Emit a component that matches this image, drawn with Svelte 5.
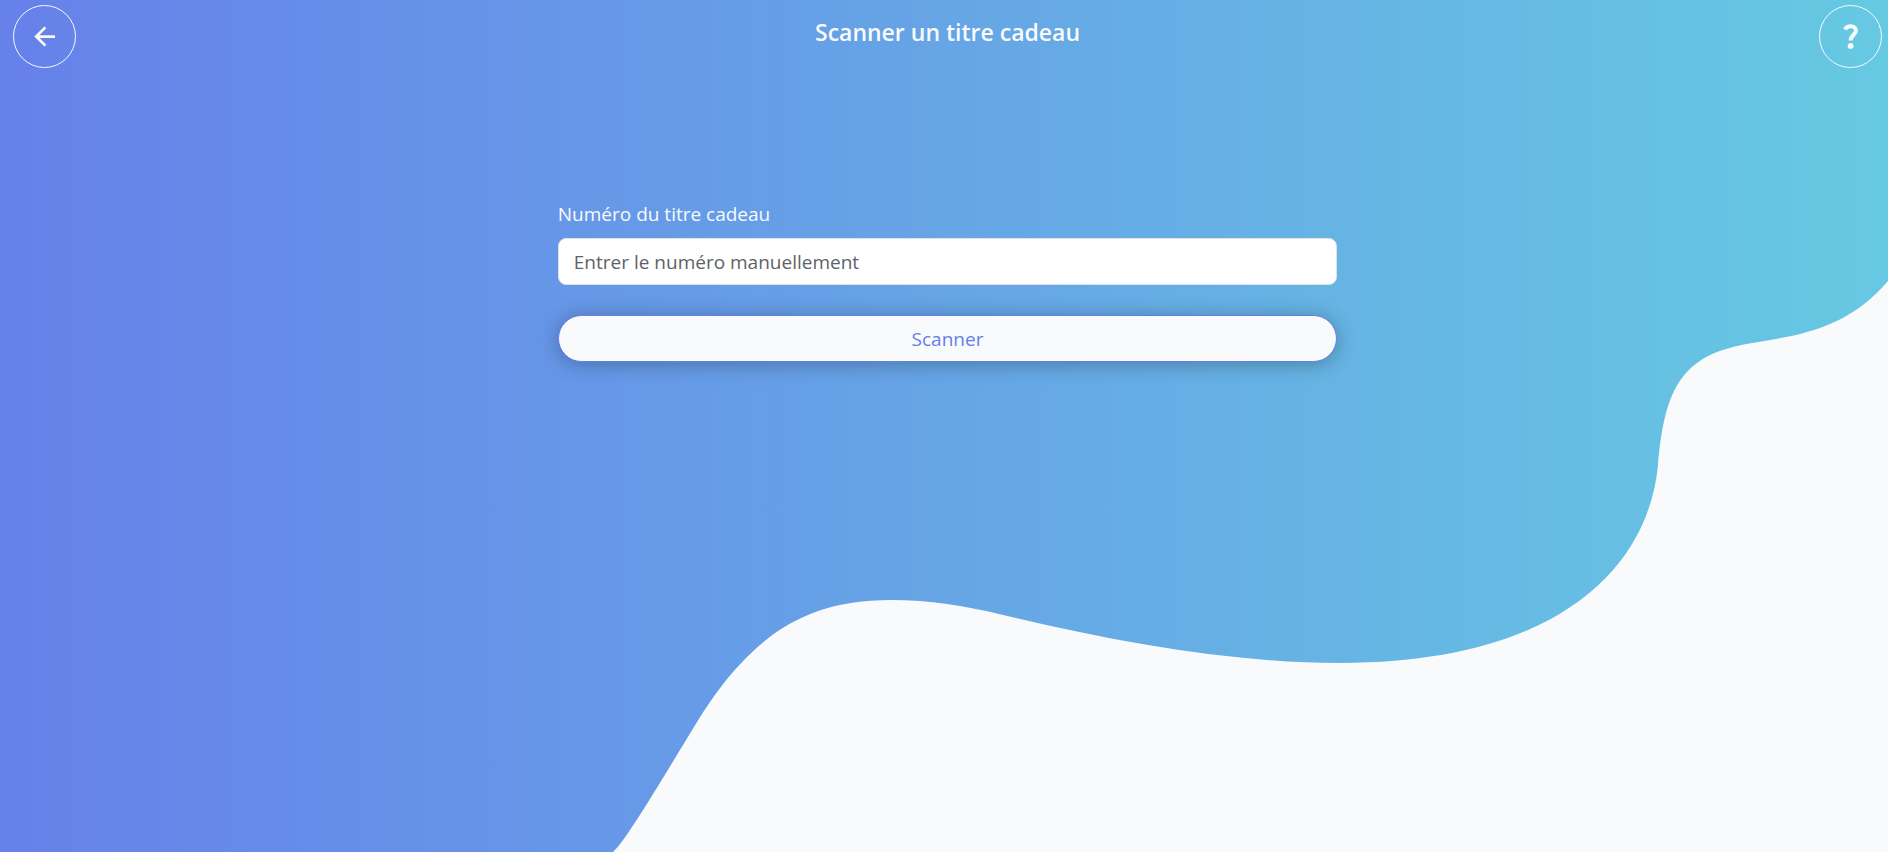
<script>
    let numero = '';

    function scanner() {
        numero = numero.trim();
    }
</script>

<style>
    :global(body) {
        background-color: #f8fafc;
    }
    .page {
        position: relative;
        min-height: 100vh;
        box-sizing: border-box;
        padding: 5px 6px 5px 13px;
        background: linear-gradient(to right, #6681ea, #66a5e6 50%, #66c9e2);
        color: #f8fafc;
        font-family: "Segoe UI", "Open Sans", "Noto Sans", sans-serif;
        font-size: 19px;
        line-height: 30px;
    }
    .wave {
        position: absolute;
        top: 0;
        left: 0;
        width: 100%;
        height: 100%;
        fill: #f8fafc;
    }
    header, form {
        position: relative;
    }
    header {
        display: flex;
        justify-content: space-between;
        align-items: flex-start;
    }
    h1 {
        margin: 10px 0 0;
        font-size: 23px;
        font-weight: 600;
        line-height: 34px;
    }
    .round {
        display: flex;
        justify-content: center;
        align-items: center;
        width: 63px;
        height: 63px;
        box-sizing: border-box;
        padding: 0;
        border: 1px solid #f8fafc;
        border-radius: 50%;
        background: none;
        color: #f8fafc;
        cursor: pointer;
    }
    form {
        display: flex;
        flex-direction: column;
        width: 41.7%;
        min-width: 280px;
        margin: 131px auto 0;
    }
    label {
        margin-bottom: 9px;
    }
    input {
        height: 47px;
        box-sizing: border-box;
        padding: 0 15px;
        border: 1px solid #dee2e6;
        border-radius: 8px;
        background-color: #fff;
        color: #212529;
        font: inherit;
    }
    input::placeholder {
        color: #5e6368;
        opacity: 1;
    }
    .scan {
        height: 47px;
        margin-top: 30px;
        border: 1px solid #667eea;
        border-radius: 24px;
        background-color: #f8fafc;
        box-shadow: 0 2px 20px rgba(0, 0, 0, 0.28);
        color: #667eea;
        font: inherit;
        cursor: pointer;
    }
</style>

<div class="page">
    <svg class="wave" viewBox="0 0 1888 852" preserveAspectRatio="none" aria-hidden="true">
        <path d="M613 852C624 843 655 791 697 722C713 696 729 675 747 657C785 619 828 600 891 600C930 600 965 606 999 614C1110 641 1230 663 1340 663C1555 663 1648 570 1658 465C1664 398 1677 361 1733 347C1775 336 1838 340 1888 281V852Z" />
    </svg>

    <header>
        <button class="round" type="button" aria-label="Retour">
            <svg width="30" height="30" viewBox="0 0 24 24" fill="none" stroke="currentColor" stroke-width="2.2">
                <path d="M20 11.6H5M12.3 4.3L5 11.6L12.3 18.9" />
            </svg>
        </button>
        <h1>Scanner un titre cadeau</h1>
        <button class="round" type="button" aria-label="Aide">
            <svg width="30" height="30" viewBox="0 0 30 30" fill="none">
                <path d="M9 7.6C10 5.2 12 4.3 14.6 4.3C17.9 4.3 20 6.1 20 8.7C20 12.7 14.6 12.8 14.6 18.4" stroke="currentColor" stroke-width="4" />
                <circle cx="14.6" cy="23.9" r="2.9" fill="currentColor" />
            </svg>
        </button>
    </header>

    <form on:submit|preventDefault={scanner}>
        <label for="numero">Numéro du titre cadeau</label>
        <input type="text" id="numero" name="numero" placeholder="Entrer le numéro manuellement" bind:value={numero}>
        <button class="scan" type="submit">Scanner</button>
    </form>
</div>
